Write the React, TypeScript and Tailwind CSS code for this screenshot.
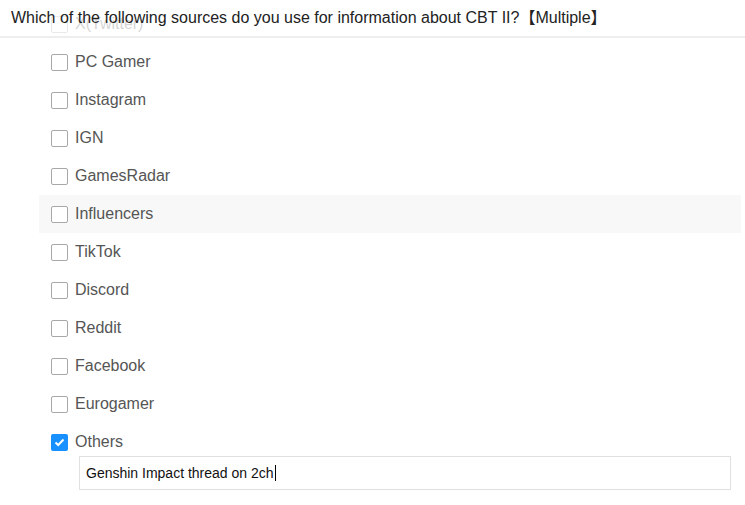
import React from 'react';

const options = [
  'X(Twitter)',
  'PC Gamer',
  'Instagram',
  'IGN',
  'GamesRadar',
  'Influencers',
  'TikTok',
  'Discord',
  'Reddit',
  'Facebook',
  'Eurogamer',
];

function Box({ checked }: { checked?: boolean }) {
  if (checked) {
    return (
      <span className="flex h-[17px] w-[17px] items-center justify-center rounded-[2px] bg-[#1890ff]">
        <svg width="11" height="9" viewBox="0 0 11 9">
          <path d="M1.5 4.5 L4.2 7 L9.5 1.5" fill="none" stroke="#fff" strokeWidth="2" />
        </svg>
      </span>
    );
  }
  return <span className="h-[17px] w-[17px] rounded-[2px] border border-[#a8a8a8] bg-white" />;
}

export default function App() {
  return (
    <div
      className="relative h-[505px] w-[745px] overflow-hidden bg-white"
      style={{ fontFamily: '"Liberation Sans", Arial, "Noto Sans CJK SC", sans-serif' }}
    >
      <div className="flex flex-col pl-[39px] pr-1 pt-[5px]">
        {options.map((o) => (
          <div
            key={o}
            className={`flex h-[38px] items-center gap-[7px] pl-3 text-base text-[#555] ${o === 'Influencers' ? 'bg-[#f8f8f8]' : ''}`}
          >
            <Box />
            <span>{o}</span>
          </div>
        ))}
        <div className="flex h-[38px] items-center gap-[7px] pl-3 text-base text-[#555]">
          <Box checked />
          <span>Others</span>
        </div>
        <div className="-mt-[5px] ml-10 flex h-[34px] w-[652px] items-center border border-[#e0e0e0] px-[6px] text-sm text-[#111]">
          <span>Genshin Impact thread on 2ch</span>
          <span className="ml-px h-4 w-px bg-black" />
        </div>
      </div>

      <div className="absolute left-0 right-0 top-0 flex h-[38px] items-center border-b-2 border-[#eee] bg-white/75 pl-[11px] text-base text-[#222]">
        Which of the following sources do you use for information about CBT II?【Multiple】
      </div>
    </div>
  );
}
